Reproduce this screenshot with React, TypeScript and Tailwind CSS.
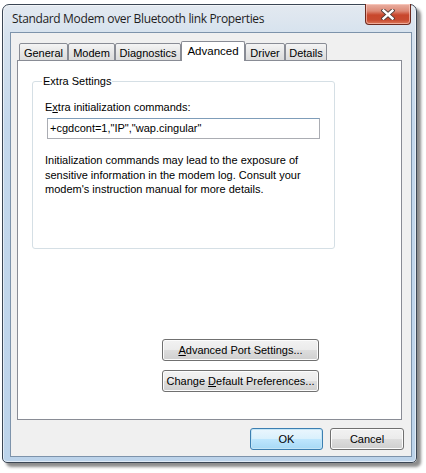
import React from "react";

const dlg = "font-['Liberation_Sans',Arial,sans-serif] text-[11px] leading-[13px] text-black";

function Tab({ label, w, selected }: { label: string; w: number; selected?: boolean }) {
  if (selected) {
    return (
      <div
        className="relative z-10 h-[20px] border border-b-0 border-[#898c95] rounded-t-[2px] bg-white flex items-start justify-center pt-[3px] text-[11.5px]"
        style={{ width: w }}
      >
        {label}
      </div>
    );
  }
  return (
    <div
      className="h-[18px] border border-[#898c95] rounded-t-[2px] bg-[linear-gradient(to_bottom,#f4f4f4,#e6e6e6_55%,#dcdcdc)] flex items-start justify-center pt-[3px]"
      style={{ width: w }}
    >
      {label}
    </div>
  );
}

function Btn({ children, w, primary }: { children: React.ReactNode; w: number; primary?: boolean }) {
  return (
    <div
      className={
        "h-[22px] rounded-[3px] border flex items-center justify-center " +
        (primary
          ? "border-[#3c7fb1] bg-[linear-gradient(to_bottom,#eaf6fd,#d9f0fc_50%,#bee6fd_51%,#a7d9f5)] shadow-[inset_0_0_0_1px_#c4e5f6]"
          : "border-[#707070] bg-[linear-gradient(to_bottom,#f2f2f2,#ebebeb_50%,#dddddd_51%,#cfcfcf)] shadow-[inset_0_0_0_1px_#fcfcfc]")
      }
      style={{ width: w }}
    >
      {children}
    </div>
  );
}

export default function App() {
  return (
    <div className="w-[426px] h-[473px] bg-white overflow-hidden">
      <div className="ml-[2px] mt-[4px] w-[415px] h-[459px] border border-[#3b4654] rounded-t-[7px] rounded-b-[5px] bg-[linear-gradient(to_bottom,#e3e9f0,#d6e2ee_30px,#c4d8ec_120px,#bcd3ea)] shadow-[4px_4px_3px_rgba(0,0,0,0.45),inset_0_0_0_1px_rgba(255,255,255,0.55)] flex flex-col">
        {/* Title bar */}
        <div className="h-[27px] flex items-start">
          <span className="ml-[9px] mt-[6px] font-['Open_Sans',Arial,sans-serif] text-[12px] leading-[16px] tracking-[-0.35px] text-[#1e1e1e]">
            Standard Modem over Bluetooth link Properties
          </span>
          <div className="ml-auto mr-[5px] -mt-[1px] w-[46px] h-[21px] rounded-b-[4px] border border-t-0 border-[#6e2a1e] bg-[linear-gradient(to_bottom,#eab0a3,#dd8a76_35%,#c8472c_55%,#c84b30_80%,#dc7a5c)] shadow-[inset_0_0_0_1px_rgba(255,210,200,0.6)] flex items-center justify-center">
            <svg width="14" height="11" viewBox="0 0 14 11">
              <path d="M2.5 1.5 L11.5 9.5 M11.5 1.5 L2.5 9.5" stroke="#4b3a36" strokeWidth="4.2" strokeLinecap="square" fill="none" />
              <path d="M2.5 1.5 L11.5 9.5 M11.5 1.5 L2.5 9.5" stroke="#ffffff" strokeWidth="2.4" strokeLinecap="square" fill="none" />
            </svg>
          </div>
        </div>

        {/* Client area */}
        <div className={"ml-[7px] mr-[4px] mb-[5px] flex-1 border border-[#7d93ab] bg-[#f0f0f0] flex flex-col " + dlg}>
          {/* Tabs */}
          <div className="mt-[8px] ml-[8px] flex items-end h-[20px] relative z-10">
            <Tab label="General" w={49} />
            <Tab label="Modem" w={47} />
            <Tab label="Diagnostics" w={66} />
            <Tab label="Advanced" w={64} selected />
            <Tab label="Driver" w={40} />
            <Tab label="Details" w={42} />
          </div>
          {/* Panel */}
          <div className="-mt-[1px] ml-[6px] w-[385px] h-[360px] border border-[#898c95] bg-white flex flex-col">
            <div className="relative mt-[20px] ml-[14px] w-[303px] h-[168px] border border-[#d5dfe5] rounded-[3px] pl-[12px] pt-[19px]">
              <span className="absolute left-[9px] -top-[7px] bg-white px-[1px]">Extra Settings</span>
              <div>
                E<span className="underline">x</span>tra initialization commands:
              </div>
              <div className="mt-[4px] ml-[2px] w-[273px] h-[21px] border border-[#abadb3] border-t-[#7f9db9] bg-white flex items-center pl-[2px]">
                +cgdcont=1,"IP","wap.cingular"
              </div>
              <div className="mt-[14px] leading-[14.5px]">
                Initialization commands may lead to the exposure of
                <br />
                sensitive information in the modem log. Consult your
                <br />
                modem's instruction manual for more details.
              </div>
            </div>
            <div className="ml-[144px] mt-[90px] flex flex-col gap-[9px]">
              <Btn w={157}>
                <span>
                  <span className="underline">A</span>dvanced Port Settings...
                </span>
              </Btn>
              <Btn w={157}>
                <span>
                  Change <span className="underline">D</span>efault Preferences...
                </span>
              </Btn>
            </div>
          </div>
          {/* Bottom buttons */}
          <div className="mt-[8px] pr-[7px] flex justify-end gap-[7px]">
            <Btn w={73} primary>OK</Btn>
            <Btn w={74}>Cancel</Btn>
          </div>
        </div>
      </div>
    </div>
  );
}
